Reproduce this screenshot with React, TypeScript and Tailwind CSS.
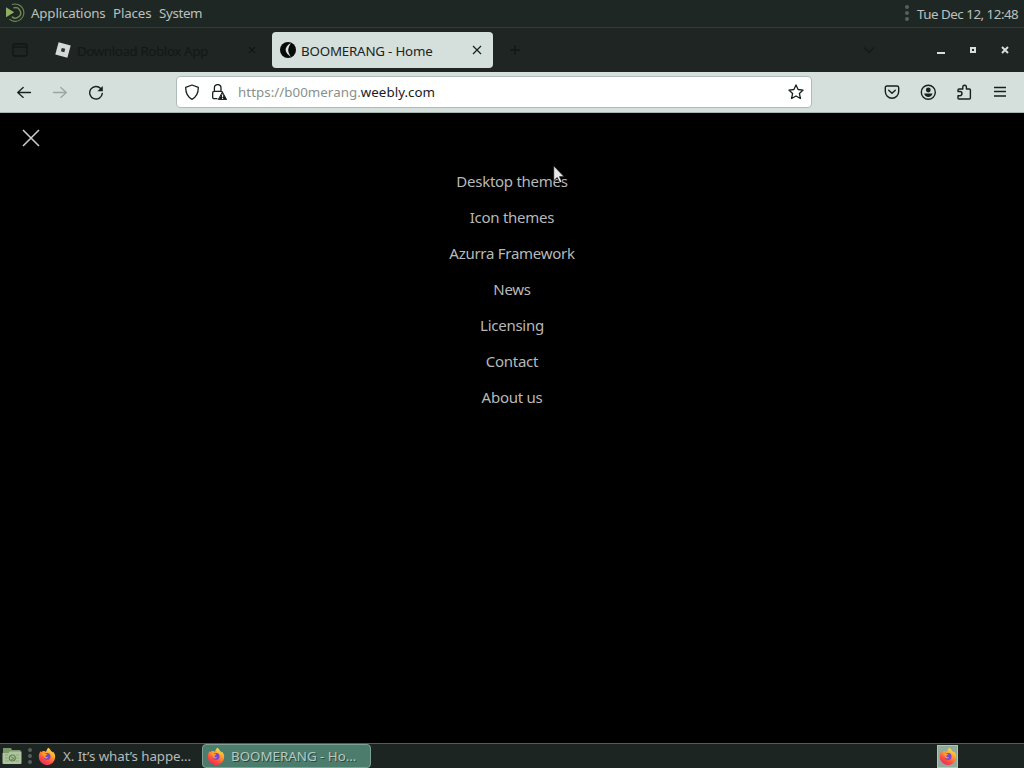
import React from 'react';

// --- Icons ---
const MateIcon = () => (
    <svg width="20" height="20" viewBox="0 0 20 20" fill="none" stroke="#6f8a50" strokeWidth="1.1">
        <path d="M7 1.6A8.7 8.7 0 1 1 4.4 16.2" />
        <path d="M8.5 5A5.2 5.2 0 1 1 6.8 13.6" strokeWidth="1.5" />
        <path d="M1 4.3 9.2 9.3 1 14.2z" fill="#8fae62" stroke="none" />
    </svg>
);

const FirefoxIcon = () => (
    <svg width="18" height="18" viewBox="0 0 18 18">
        <defs>
            <linearGradient id="fox" x1="0.8" y1="0" x2="0.25" y2="1">
                <stop offset="0" stopColor="#fff04a" />
                <stop offset="0.4" stopColor="#ff9a2c" />
                <stop offset="0.72" stopColor="#ff4b3e" />
                <stop offset="1" stopColor="#e3286c" />
            </linearGradient>
        </defs>
        <path d="M10.2.8c1.7 1 2.5 2.4 2.8 3.3.8.3 1.1.9 1.2 1.4.5-.2.7-.7.7-1 1.6 1.6 2.4 3.5 2.3 5.5A8.2 8.2 0 0 1 .8 9.8C.8 7.7 1.5 5.6 2.8 4c0 .5.2.9.4 1.2.8-.8 1.7-1.2 2.7-1.1.9.1 1.6.4 2.1.8.5-1.5 1-2.9 2.2-4.1z" fill="url(#fox)" />
        <circle cx="9.1" cy="9.4" r="3.4" fill="#7747c9" />
        <path d="M3.6 6.3c1.5-.8 2.5-.2 3.4.2 1 .4 1.8.1 2.2.7-.2 1-1.5 1-1.8 1.7-.2 1.2 1.4 1.8 3 .8-.9 2.6-4.8 2.1-4.9-.9z" fill="#ff9b30" />
    </svg>
);

const FolderIcon = () => (
    <svg width="20" height="18" viewBox="0 0 20 18">
        <path d="M1 1h8l1 2h8.5v5H1z" fill="#7c986c" />
        <path d="M.5 6h6l1-1.5h12V16q0 1-1 1h-17q-1 0-1-1z" fill="#adc49c" />
        <path d="M3 8h3m8 0h3M3 14h4m7 0h3M3 11h3m8 0h3" stroke="#8ba77a" />
        <circle cx="10.3" cy="11" r="3" fill="none" stroke="#637e55" strokeWidth="1.2" />
        <path d="m8.5 9.5 3.5 2-3 1.5" fill="none" stroke="#637e55" />
    </svg>
);

const RobloxIcon = () => (
    <svg width="16" height="16" viewBox="0 0 16 16">
        <path d="M3.6.3 15.7 3.6 12.4 15.7.3 12.4z" fill="#d5dad9" />
        <path d="m6.8 5.9 3.4.9-.9 3.4-3.4-.9z" fill="#26302e" />
    </svg>
);

const BoomerangIcon = () => (
    <svg width="16" height="16" viewBox="0 0 16 16">
        <circle cx="8" cy="8" r="8" fill="#080b0a" />
        <path d="M10.8 1C7.6 3 5.5 5.6 5.6 8.1c.1 2.4 2.5 5 5.3 6.9C9.6 12.8 8.2 10.2 8.2 8.1c0-2 1.2-4.6 2.6-7.1z" fill="#d9e3df" />
    </svg>
);

const CloseIcon = ({ size, color, width = 1.2 }: { size: number; color: string; width?: number }) => (
    <svg width={size} height={size} viewBox={`0 0 ${size} ${size}`} fill="none" stroke={color} strokeWidth={width}>
        <path d={`M1 1 ${size - 1} ${size - 1}M${size - 1} 1 1 ${size - 1}`} />
    </svg>
);

const line = { width: 16, height: 16, viewBox: '0 0 16 16', fill: 'none', stroke: '#18201d', strokeWidth: 1.3, strokeLinecap: 'round', strokeLinejoin: 'round' } as const;

const BackIcon = () => <svg {...line}><path d="M14.5 8.5H1.7M7.2 3.4 1.7 8.5l5.5 4.9" /></svg>;
const ForwardIcon = () => <svg {...line} stroke="#98a7a1"><path d="M1.5 8.5h12.8M8.8 3.4l5.5 5.1-5.5 4.9" /></svg>;
const ReloadIcon = () => (
    <svg {...line} strokeWidth="1.4">
        <path d="M12.7 4.5A6.3 6.3 0 1 0 14.3 9.4" />
        <path d="M14.8 1.9v5.4H9.4z" fill="#18201d" stroke="none" />
    </svg>
);
const ShieldIcon = () => <svg {...line}><path d="M8 1 14.3 3.4C14.4 9 12.5 13 8 15.3 3.5 13 1.6 9 1.7 3.4z" /></svg>;
const LockIcon = () => (
    <svg {...line}>
        <path d="M6 14.7H3.2q-1.5 0-1.5-1.5V8.8q0-1.5 1.5-1.5h7q1.2 0 1.4 1M3.4 7.2V3.9a3.3 3.3 0 0 1 6.6 0v3.3" />
        <path d="m11.6 8.4 4 7.2H7.6z" fill="#18201d" strokeWidth="1" />
        <path d="M11.6 10.8v2m0 1.5v.2" stroke="#fff" strokeWidth="1.1" />
    </svg>
);
const StarIcon = () => <svg {...line}><path d="m8 .9 2.1 4.6 5 .6-3.7 3.4 1 5L8 12l-4.4 2.5 1-5L.9 6.1l5-.6z" /></svg>;
const PocketIcon = () => (
    <svg {...line} strokeWidth="1.4">
        <path d="M3 2h10q1.7 0 1.7 1.7v3.8a6.7 6.7 0 0 1-13.4 0V3.7Q1.3 2 3 2z" />
        <path d="M4.7 6.2 8 9.3l3.3-3.1" />
    </svg>
);
const AccountIcon = () => (
    <svg {...line} strokeWidth="1.4">
        <circle cx="8.3" cy="8.3" r="7" />
        <circle cx="8.3" cy="6" r="2.4" fill="#18201d" stroke="none" />
        <path d="M4.1 9.6h8.4q-.9 3.4-4.2 3.4T4.1 9.6z" fill="#18201d" stroke="none" />
    </svg>
);
const PuzzleIcon = () => (
    <svg {...line} strokeWidth="1.4">
        <path d="M2 7.5V6q0-1 1-1h3.8V3.1a1.8 1.8 0 0 1 3.6 0V5h3q1 0 1 1v8q0 1-1 1H3q-1 0-1-1v-2.3h1.9a2.1 2.1 0 0 0 0-4.2z" />
    </svg>
);
const MenuIcon = () => <svg {...line} strokeLinecap="butt" strokeWidth="1.4"><path d="M2 3.5h12M2 7.5h12M2 12h12" /></svg>;

const Grip = () => (
    <div className="flex w-1 flex-col gap-0.5">
        <span className="h-1 rounded-sm bg-[#57605b]" />
        <span className="h-1 rounded-sm bg-[#57605b]" />
        <span className="h-1 rounded-sm bg-[#57605b]" />
    </div>
);

// --- Desktop panel ---
const TopPanel = () => (
    <header className="flex h-7 items-center border-b border-[#343c39] bg-[#1e2724] pb-px text-[13.33px] text-[#bbc1be]">
        <div className="ml-[5px] w-[26px]"><MateIcon /></div>
        <span className="w-[82px] tracking-[-0.17px]">Applications</span>
        <span className="w-[46px] tracking-[-0.15px]">Places</span>
        <span className="tracking-[-0.35px]">System</span>
        <div className="ml-auto mr-2"><Grip /></div>
        <span className="w-[107px] whitespace-nowrap pt-px tracking-[-0.48px]">Tue Dec 12, 12:48</span>
    </header>
);

// --- Firefox tabs ---
const TabStrip = () => (
    <div className="flex h-11 items-center bg-[#1e2522] text-[13.33px]">
        <div className="ml-3 flex w-[43px] items-center">
            <svg width="16" height="16" viewBox="0 0 16 16" fill="none" stroke="#101614" strokeWidth="1.3"><rect x="1" y="2" width="14" height="12" rx="1.5" /><path d="M1 5h14" /></svg>
        </div>
        <div className="flex w-[217px] items-center">
            <RobloxIcon />
            <span className="ml-1.5 w-[171px] whitespace-nowrap pt-0.5 tracking-[-0.38px] text-[#121816]">Download Roblox App</span>
            <CloseIcon size={8} color="#111715" />
        </div>
        <div className="flex h-9 w-[221px] items-center rounded bg-[#d5dfdb] pl-2 text-[#1c2421]">
            <BoomerangIcon />
            <span className="ml-[5px] w-[171px] whitespace-nowrap pt-0.5 tracking-[-0.2px]">BOOMERANG - Home</span>
            <CloseIcon size={10} color="#18201d" />
        </div>
        <svg className="ml-4" width="12" height="12" viewBox="0 0 12 12" stroke="#101614" strokeWidth="1.3"><path d="M1 6h10M6 1v10" /></svg>
        <svg className="ml-auto" width="12" height="8" viewBox="0 0 12 8" fill="none" stroke="#141a18" strokeWidth="1.3"><path d="m1 1.5 5 5 5-5" /></svg>
        <div className="ml-[62px] mr-[15px] flex items-center">
            <span className="mt-1.5 h-0.5 w-2 bg-[#d5dfdb]" />
            <span className="ml-[25px] size-1.5 border-2 border-[#d5dfdb]" />
            <CloseButton />
        </div>
    </div>
);

const CloseButton = () => (
    <div className="ml-[25px]"><CloseIcon size={8} color="#d5dfdb" width={2} /></div>
);

// --- Firefox toolbar ---
const Toolbar = () => (
    <div className="flex h-[41px] items-center border-b border-[#a7b5af] bg-[#d5dfdb] text-[13.33px]">
        <div className="ml-4 flex gap-5">
            <BackIcon />
            <ForwardIcon />
            <ReloadIcon />
        </div>
        <div className="ml-[72px] flex h-8 w-[636px] items-center rounded border border-[#aebcb6] bg-white pl-[7px] pr-[7px]">
            <ShieldIcon />
            <div className="ml-[11px] mr-[11px]"><LockIcon /></div>
            <span className="whitespace-nowrap tracking-[0.04px] text-[#89908d]">https://b00merang.<span className="text-[#18201d]">weebly.com</span></span>
            <div className="ml-auto"><StarIcon /></div>
        </div>
        <div className="ml-auto mr-4 flex gap-5">
            <PocketIcon />
            <AccountIcon />
            <PuzzleIcon />
            <MenuIcon />
        </div>
    </div>
);

// --- Page ---
const links = ['Desktop themes', 'Icon themes', 'Azurra Framework', 'News', 'Licensing', 'Contact', 'About us'];

const Page = () => (
    <main className="relative flex-1 bg-black">
        <div className="pl-[22px] pt-4">
            <CloseIcon size={18} color="#cbcbcb" width={1.6} />
        </div>
        <nav className="mt-4 flex flex-col items-center text-[15px] tracking-[-0.27px] text-[#b9b9b9]">
            {links.map(link => (
                <a key={link} className="h-9 leading-9">{link}</a>
            ))}
        </nav>
        <svg className="absolute left-[553px] top-[52px]" width="12" height="19" viewBox="0 0 12 19">
            <path d="M.7.8v15l3.5-3.2 2.6 5.2 2.2-1.1-2.5-5h4.7z" fill="#e8e8e8" stroke="#111" strokeWidth="0.8" />
        </svg>
    </main>
);

// --- Window list ---
const BottomPanel = () => (
    <footer className="flex h-[25px] items-center border-t border-[#555b58] bg-[#1d2522] text-[13.33px] text-[#b5bbb8]">
        <div className="ml-0.5"><FolderIcon /></div>
        <div className="ml-1.5"><Grip /></div>
        <div className="ml-1.5 flex w-[164px] items-center gap-[7px] whitespace-nowrap">
            <FirefoxIcon />
            <span className="tracking-[-0.07px]">X. It’s what’s happe…</span>
        </div>
        <div className="flex h-6 w-[169px] items-center gap-1.5 whitespace-nowrap rounded border border-[#7fa193] bg-[#4c7c6c] pl-1 text-[#bac9c2] [text-shadow:1px_1px_#274a3d]">
            <FirefoxIcon />
            <span>BOOMERANG - Ho…</span>
        </div>
        <div className="ml-auto mr-[66px] flex h-[23px] w-[21px] items-center justify-center border border-[#b3c2bb] bg-[#91aa9c]">
            <FirefoxIcon />
        </div>
    </footer>
);

const App: React.FC = () => (
    <div className="flex h-screen w-screen flex-col overflow-hidden font-['Noto_Sans',sans-serif] leading-5">
        <TopPanel />
        <TabStrip />
        <Toolbar />
        <Page />
        <BottomPanel />
    </div>
);

export default App;
